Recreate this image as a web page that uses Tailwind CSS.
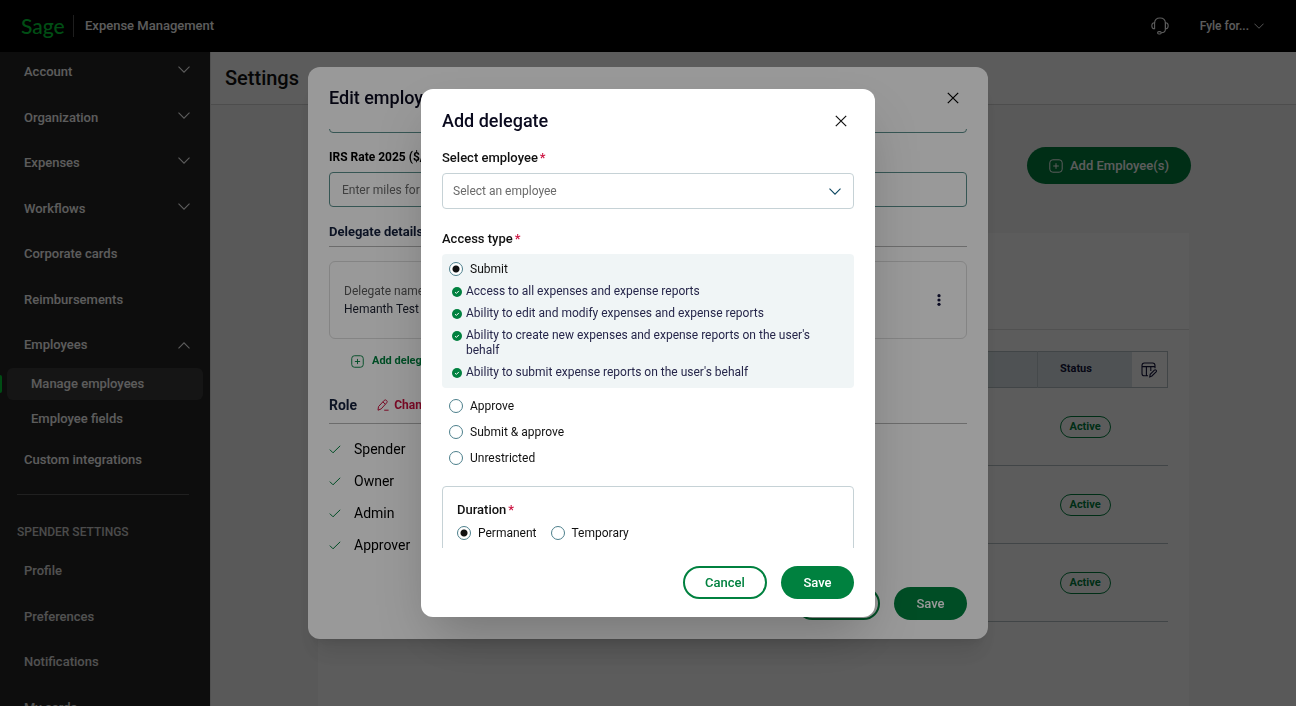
<!DOCTYPE html>
<html lang="en">
  <head>
    <meta charset="UTF-8">
    <meta name="viewport" content="width=device-width, initial-scale=1.0">
    <title>Sage Expense Management</title>
    <script src="https://cdn.jsdelivr.net/npm/@tailwindcss/browser@4"></script>
  </head>
  <body>
    <!-- shared icons -->
    <svg class="hidden">
      <symbol id="chevron" viewBox="0 0 12 7"><path d="M0.5 0.7 L6 6.2 L11.5 0.7" fill="none" stroke="currentColor" stroke-width="1.1"/></symbol>
      <symbol id="close" viewBox="0 0 12 12"><path d="M0.8 0.8 L11.2 11.2 M11.2 0.8 L0.8 11.2" fill="none" stroke="currentColor" stroke-width="1.2"/></symbol>
      <symbol id="plus-box" viewBox="0 0 14 14"><rect x="0.8" y="0.8" width="12.4" height="12.4" rx="3" fill="none" stroke="currentColor"/><path d="M7 4.2 V9.8 M4.2 7 H9.8" fill="none" stroke="currentColor"/></symbol>
      <symbol id="tick" viewBox="0 0 12 9"><path d="M0.8 4.6 L4 7.8 L11.2 0.8" fill="none" stroke="currentColor" stroke-width="1"/></symbol>
      <symbol id="tick-circle" viewBox="0 0 10 10"><circle cx="5" cy="5" r="5" fill="#00813f"/><path d="M3.1 5.2 L4.4 6.4 L6.9 3.9" fill="none" stroke="#fff"/></symbol>
    </svg>

    <div class="flex h-screen flex-col overflow-hidden bg-[#f5f5f5]" style='font-family: Roboto, "Liberation Sans", sans-serif;'>
      <!-- top bar -->
      <header class="flex h-[52px] shrink-0 items-center bg-black pr-8 pl-[21px] text-[13px] font-medium text-white">
        <a href="#" class="w-[52px] text-[21px] leading-6 text-[#00d639]" style="font-family: Lato, sans-serif;">Sage</a>
        <span class="h-[22px] w-px bg-[#555]"></span>
        <span class="ml-[11px] flex-1">Expense Management</span>
        <button aria-label="Support" class="mr-[31px]">
          <svg class="h-[18px] w-[18px]" viewBox="0 0 18 18" fill="none" stroke="currentColor" stroke-width="1.1"><path d="M3.6 6 C3.6 2.8 5.4 1 9 1 S14.4 2.8 14.4 6 V12 C14.4 14.6 12.8 15.8 10.2 15.8"/><path d="M3.6 5.8 C1.6 5.8 0.8 7 0.8 8.7 S1.6 11.8 3.6 11.8 Z M14.4 5.8 C16.4 5.8 17.2 7 17.2 8.7 S16.4 11.8 14.4 11.8 Z"/><rect x="6.6" y="14.6" width="3.6" height="2.4" rx="1.2"/></svg>
        </button>
        <button class="flex items-center gap-[5px] text-xs font-medium">Fyle for...<svg class="h-[6px] w-[10px]"><use href="#chevron"/></svg></button>
      </header>

      <div class="flex min-h-0 flex-1">
        <!-- sidebar -->
        <nav class="w-[210px] shrink-0 overflow-hidden bg-[#252525] text-[13px] leading-5 font-medium text-white">
          <div class="grid h-[273px] grid-rows-6 pr-5 pl-6">
            <a href="#" class="flex items-start justify-between pt-[10px]">Account<svg class="mt-1 h-[7px] w-3"><use href="#chevron"/></svg></a>
            <a href="#" class="flex items-start justify-between pt-[10px]">Organization<svg class="mt-1 h-[7px] w-3"><use href="#chevron"/></svg></a>
            <a href="#" class="flex items-start justify-between pt-[10px]">Expenses<svg class="mt-1 h-[7px] w-3"><use href="#chevron"/></svg></a>
            <a href="#" class="flex items-start justify-between pt-[10px]">Workflows<svg class="mt-1 h-[7px] w-3"><use href="#chevron"/></svg></a>
            <a href="#" class="pt-[10px]">Corporate cards</a>
            <a href="#" class="pt-[10px]">Reimbursements</a>
          </div>
          <a href="#" class="flex h-[43px] items-start justify-between pt-[10px] pr-5 pl-6">Employees<svg class="mt-[7px] h-[7px] w-3 rotate-180"><use href="#chevron"/></svg></a>
          <div class="flex items-center gap-[5px] pr-[7px]">
            <span class="h-[18px] w-[2px] rounded-r bg-[#00d639]"></span>
            <a href="#" class="flex h-8 flex-1 items-center rounded-md bg-[#3c3c3c] pl-6">Manage employees</a>
          </div>
          <a href="#" class="flex h-[38px] items-center pl-[31px]">Employee fields</a>
          <a href="#" class="flex h-[43px] items-center pl-6">Custom integrations</a>
          <hr class="mr-[21px] ml-[17px] mt-[13px] border-[#5a5a5a]">
          <p class="mt-[27px] pl-[17px] text-[12px] text-[#d0d0d0]">SPENDER SETTINGS</p>
          <div class="mt-[7px] grid h-[182px] grid-rows-4 pl-6 text-[#e0e0e0]">
            <a href="#" class="pt-3">Profile</a>
            <a href="#" class="pt-3">Preferences</a>
            <a href="#" class="pt-3">Notifications</a>
            <a href="#" class="pt-3">My cards</a>
          </div>
        </nav>

        <!-- page -->
        <main class="flex min-w-0 flex-1 flex-col border-l border-[#e0e0e0]">
          <h1 class="flex h-[53px] shrink-0 items-center border-b border-[#d5d5d5] bg-white pl-[14px] text-xl font-medium text-[#111]">Settings</h1>
          <div class="flex justify-end px-[105px] pt-[42px]">
            <button class="flex h-[37px] items-center gap-[7px] rounded-full bg-[#00813f] px-[22px] text-[13px] font-medium text-white"><svg class="h-[14px] w-[14px]"><use href="#plus-box"/></svg>Add Employee(s)</button>
          </div>
          <section class="mx-[107px] mt-[49px] flex-1 bg-white">
            <div class="h-[97px] border-b border-[#dfdfdf]"></div>
            <div class="px-[21px] pt-[21px]">
              <table class="w-full table-fixed text-[11px]">
                <thead>
                  <tr class="h-9 border border-[#b5c0c4] bg-[#dbe4e8]">
                    <th></th>
                    <th class="w-[94px] border-l border-[#c0cbcf] pl-[22px] text-left font-bold text-[#14143c]">Status</th>
                    <th class="w-9 bg-white">
                      <button aria-label="Edit columns" class="flex w-full justify-center text-[#14143c]"><svg class="h-4 w-4" viewBox="0 0 16 16" fill="none" stroke="currentColor" stroke-width="1.1"><path d="M14 6.2 V3.4 Q14 1 11.6 1 H3.4 Q1 1 1 3.4 V11.4 Q1 13.8 3.4 13.8 H7 M1 4.6 H14 M5.4 4.6 V13.8 M9.8 4.6 V9"/><path d="M8.8 14.9 L9.2 12.3 L13.4 8.1 Q14.2 7.4 15 8.2 T15.1 9.8 L10.9 14 Z"/></svg></button>
                    </th>
                  </tr>
                </thead>
                <tbody>
                  <tr class="h-[78px] border-b border-[#b5c0c4]"><td></td><td class="pl-[22px]"><span class="inline-block h-[22px] rounded-full border border-[#00813f] px-[9px] leading-5 font-bold text-[#00813f]">Active</span></td><td></td></tr>
                  <tr class="h-[78px] border-b border-[#b5c0c4]"><td></td><td class="pl-[22px]"><span class="inline-block h-[22px] rounded-full border border-[#00813f] px-[9px] leading-5 font-bold text-[#00813f]">Active</span></td><td></td></tr>
                  <tr class="h-[78px] border-b border-[#b5c0c4]"><td></td><td class="pl-[22px]"><span class="inline-block h-[22px] rounded-full border border-[#00813f] px-[9px] leading-5 font-bold text-[#00813f]">Active</span></td><td></td></tr>
                </tbody>
              </table>
            </div>
          </section>
        </main>
      </div>

      <!-- edit employee dialog -->
      <div class="fixed inset-0 flex items-center justify-center bg-black/40">
        <div role="dialog" aria-labelledby="edit-title" class="w-full max-w-[680px] rounded-xl bg-white px-[21px] pb-[19px] shadow-xl">
          <div class="flex h-[62px] items-center justify-between pr-2">
            <h2 id="edit-title" class="text-lg font-medium text-[#0a0a1e]">Edit employee</h2>
            <button aria-label="Close"><svg class="h-3 w-3"><use href="#close"/></svg></button>
          </div>
          <div class="h-[458px] overflow-hidden">
            <input aria-label="Mileage" class="-mt-[31px] block h-[35px] w-full rounded border border-[#5b8f8c]">
            <label for="irs" class="mt-[14px] block text-xs leading-5 font-bold">IRS Rate 2025 ($/mile)</label>
            <input id="irs" placeholder="Enter miles for the year" class="mt-[5px] block h-[35px] w-full rounded border border-[#5b8f8c] px-3 text-xs placeholder:text-[#6b6b6b]">
            <h3 class="mt-[15px] border-b border-[#b5b5b5] pb-1 text-[13px] leading-5 font-bold text-[#14203c]">Delegate details</h3>
            <div class="mt-[14px] flex h-[78px] items-center justify-between rounded-md border border-[#dcdcdc] pr-[21px] pl-[14px]">
              <div class="text-xs leading-[18px]">
                <p class="text-[#5c5c5c]">Delegate name</p>
                <p class="text-[#1c2030]">Hemanth Test</p>
              </div>
              <button aria-label="More"><svg class="h-3 w-3" viewBox="0 0 12 12" fill="#14143c"><circle cx="6" cy="1.7" r="1.6"/><circle cx="6" cy="6" r="1.6"/><circle cx="6" cy="10.3" r="1.6"/></svg></button>
            </div>
            <button class="mt-3 ml-[22px] flex items-center gap-2 text-[11px] leading-5 font-bold text-[#00813f]"><svg class="h-[13px] w-[13px]"><use href="#plus-box"/></svg>Add delegate</button>
            <div class="mt-[22px] flex items-center border-b border-[#b5b5b5] pb-[6px] leading-6">
              <h3 class="text-sm leading-6 font-bold text-[#14203c]">Role</h3>
              <button class="ml-5 flex items-center gap-[5px] text-xs font-bold text-[#cc1240]"><svg class="h-3 w-3" viewBox="0 0 12 12" fill="none" stroke="currentColor"><path d="M1 11.2 L1.5 7.6 L7.2 1.4 Q8.4 0.3 9.6 1.5 T9.7 3.8 L4.2 9.9 Z M5.9 2.9 L8.3 5.2 M7.2 11.2 H11.6"/></svg>Change role</button>
            </div>
            <ul class="mt-[9px] text-sm leading-8">
              <li class="flex items-center gap-[13px]"><svg class="h-[9px] w-3 text-[#00813f]"><use href="#tick"/></svg>Spender</li>
              <li class="flex items-center gap-[13px]"><svg class="h-[9px] w-3 text-[#00813f]"><use href="#tick"/></svg>Owner</li>
              <li class="flex items-center gap-[13px]"><svg class="h-[9px] w-3 text-[#00813f]"><use href="#tick"/></svg>Admin</li>
              <li class="flex items-center gap-[13px]"><svg class="h-[9px] w-3 text-[#00813f]"><use href="#tick"/></svg>Approver</li>
            </ul>
          </div>
          <div class="flex justify-end gap-[14px] text-[13px] font-medium">
            <button class="h-[33px] w-[84px] rounded-full border-2 border-[#00813f] text-[#00813f]">Cancel</button>
            <button class="h-[33px] w-[73px] rounded-full bg-[#00813f] text-white">Save</button>
          </div>
        </div>
      </div>

      <!-- add delegate dialog -->
      <div class="fixed inset-0 flex items-center justify-center bg-black/40">
        <form role="dialog" aria-labelledby="add-title" class="w-full max-w-[454px] rounded-xl bg-white px-[21px] pb-[18px] text-xs text-[#111] shadow-2xl">
          <div class="flex h-[59px] items-center justify-between pt-1 pr-[7px]">
            <h2 id="add-title" class="text-lg font-medium text-[#0a0a1e]">Add delegate</h2>
            <button type="button" aria-label="Close"><svg class="h-3 w-3"><use href="#close"/></svg></button>
          </div>
          <div class="h-[400px] overflow-hidden">
            <label for="employee" class="flex gap-[2px] text-[13px] leading-5 font-medium">Select employee<span class="text-[#cc1240]">*</span></label>
            <div class="mt-[5px] grid items-center">
              <select id="employee" class="col-start-1 row-start-1 h-9 appearance-none rounded border border-[#c6d2d6] px-[10px] text-[#6b6b6b]">
                <option>Select an employee</option>
              </select>
              <svg class="pointer-events-none col-start-1 row-start-1 mr-[13px] h-[7px] w-3 justify-self-end text-[#0b4660]"><use href="#chevron"/></svg>
            </div>
            <fieldset>
              <legend class="flex gap-[2px] pt-5 text-[13px] leading-5 font-medium">Access type<span class="text-[#cc1240]">*</span></legend>
              <div class="mt-[5px] rounded bg-[#f0f5f6] px-[7px] pt-[5px] pb-2">
                <label class="flex items-center gap-[7px] leading-5"><input type="radio" name="access" checked class="h-[14px] w-[14px] appearance-none rounded-full border border-[#4d7f8c] bg-white checked:bg-[radial-gradient(circle,#111_0_3px,#fff_4px)]">Submit</label>
                <ul class="mt-[5px] flex flex-col gap-[7px] pr-4 pl-[3px] leading-[15px] text-[#26264a]">
                  <li class="flex gap-1"><svg class="mt-[3px] h-[10px] w-[10px] shrink-0"><use href="#tick-circle"/></svg>Access to all expenses and expense reports</li>
                  <li class="flex gap-1"><svg class="mt-[3px] h-[10px] w-[10px] shrink-0"><use href="#tick-circle"/></svg>Ability to edit and modify expenses and expense reports</li>
                  <li class="flex gap-1"><svg class="mt-[3px] h-[10px] w-[10px] shrink-0"><use href="#tick-circle"/></svg>Ability to create new expenses and expense reports on the user's behalf</li>
                  <li class="flex gap-1"><svg class="mt-[3px] h-[10px] w-[10px] shrink-0"><use href="#tick-circle"/></svg>Ability to submit expense reports on the user's behalf</li>
                </ul>
              </div>
              <div class="flex flex-col gap-[6px] pt-2 pl-[7px] leading-5">
                <label class="flex items-center gap-[7px]"><input type="radio" name="access" class="h-[14px] w-[14px] appearance-none rounded-full border border-[#4d7f8c] bg-white">Approve</label>
                <label class="flex items-center gap-[7px]"><input type="radio" name="access" class="h-[14px] w-[14px] appearance-none rounded-full border border-[#4d7f8c] bg-white">Submit &amp; approve</label>
                <label class="flex items-center gap-[7px]"><input type="radio" name="access" class="h-[14px] w-[14px] appearance-none rounded-full border border-[#4d7f8c] bg-white">Unrestricted</label>
              </div>
            </fieldset>
            <fieldset class="mt-[18px] h-24 rounded border border-[#c6d2d6] px-[14px]">
              <div class="flex gap-[2px] pt-[13px] text-[13px] leading-5 font-medium">Duration<span class="text-[#cc1240]">*</span></div>
              <div class="mt-[3px] flex gap-[14px] leading-5">
                <label class="flex items-center gap-[7px]"><input type="radio" name="duration" checked class="h-[14px] w-[14px] appearance-none rounded-full border border-[#4d7f8c] bg-white checked:bg-[radial-gradient(circle,#111_0_3px,#fff_4px)]">Permanent</label>
                <label class="flex items-center gap-[7px]"><input type="radio" name="duration" class="h-[14px] w-[14px] appearance-none rounded-full border border-[#4d7f8c] bg-white">Temporary</label>
              </div>
            </fieldset>
          </div>
          <div class="mt-[18px] flex justify-end gap-[14px] text-[13px] font-medium">
            <button type="button" class="h-[33px] w-[84px] rounded-full border-2 border-[#00813f] text-[#00813f]">Cancel</button>
            <button type="button" class="h-[33px] w-[73px] rounded-full bg-[#00813f] text-white">Save</button>
          </div>
        </form>
      </div>
    </div>
  </body>
</html>
